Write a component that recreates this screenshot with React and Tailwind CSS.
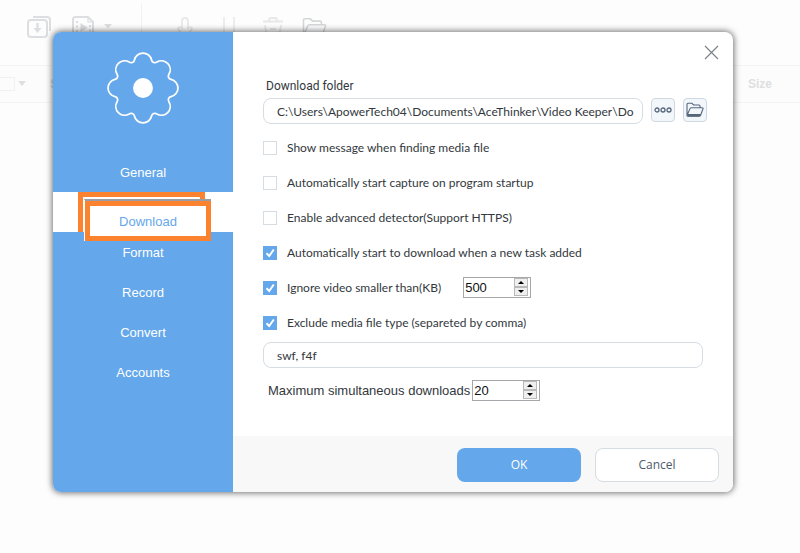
import { useState } from 'react';
import { clsx } from 'clsx';

const NAV_ITEMS = ['General', 'Download', 'Format', 'Record', 'Convert', 'Accounts'];

const OPTIONS = [
  { id: 'message',  label: 'Show message when finding media file' },
  { id: 'startup',  label: 'Automatically start capture on program startup' },
  { id: 'detector', label: 'Enable advanced detector(Support HTTPS)' },
  { id: 'auto',     label: 'Automatically start to download when a new task added' },
  { id: 'ignore',   label: 'Ignore video smaller than(KB)' },
  { id: 'exclude',  label: 'Exclude media file type (separeted by comma)' },
];

function FlowerIcon() {
  return (
    <svg width="74" height="74" viewBox="-38 -38 76 76" fill="none" aria-hidden="true">
      <path
        d="M-8.8-28.8A9 9 0 0 1 8.8-28.8A3.5 3.5 0 0 0 14.2-26.6A9 9 0 0 1 26.6-14.2A3.5 3.5 0 0 0 28.8-8.8A9 9 0 0 1 28.8 8.8A3.5 3.5 0 0 0 26.6 14.2A9 9 0 0 1 14.2 26.6A3.5 3.5 0 0 0 8.8 28.8A9 9 0 0 1-8.8 28.8A3.5 3.5 0 0 0-14.2 26.6A9 9 0 0 1-26.6 14.2A3.5 3.5 0 0 0-28.8 8.8A9 9 0 0 1-28.8-8.8A3.5 3.5 0 0 0-26.6-14.2A9 9 0 0 1-14.2-26.6A3.5 3.5 0 0 0-8.8-28.8Z"
        stroke="#fff"
        strokeWidth="1.8"
      />
      <circle r="10.2" fill="#fff" />
    </svg>
  );
}

function FolderIcon({ className }) {
  return (
    <svg width="18" height="16" viewBox="0 0 18 16" fill="none" className={className} aria-hidden="true">
      <path
        d="M1 13.5V2.2Q1 1.2 2 1.2H5.8L7.6 3H13Q14 3 14 4V5.6M1 13.5L4 6.6Q4.4 5.7 5.4 5.7H16.2Q17.4 5.7 17 6.8L14.6 13.2Q14.2 14.3 13 14.3H1.8Q1 14.3 1 13.5Z"
        stroke="currentColor"
        strokeWidth="1.1"
        strokeLinejoin="round"
      />
      <path d="M1.6 12H15L14.4 13.6Q14 14.4 13 14.4H1.6Z" fill="currentColor" />
    </svg>
  );
}

function Toolbar() {
  return (
    <div className="flex h-[65px] items-start pl-[26px] pt-1 text-[#dcdee1]">
      <div className="flex pt-[11px]">
        <button aria-label="New download">
          <svg width="26" height="24" viewBox="0 0 26 24" fill="none" stroke="currentColor" strokeWidth="2">
            <rect x="2" y="5" width="19" height="17" rx="3" />
            <path d="M7 2H21Q24 2 24 5V16" />
            <path d="M11.5 8V14" strokeWidth="2.4" />
            <path d="M7.5 13H15.5L11.5 18Z" fill="currentColor" stroke="none" />
          </svg>
        </button>
        <button aria-label="Media" className="ml-5">
          <svg width="24" height="24" viewBox="0 0 24 24" fill="none" stroke="currentColor" strokeWidth="2">
            <path d="M4 2H16L21 7V22H3Q1 22 1 20V4Q1 2 4 2Z" />
            <path d="M16 2V7H21" strokeWidth="1.2" />
            <path d="M5 6V20M18 10V20" strokeDasharray="2 2.5" />
            <path d="M8.5 8L15.5 12.5L8.5 17Z" fill="currentColor" stroke="none" />
          </svg>
        </button>
        <svg className="ml-2 mt-2" width="8" height="6" viewBox="0 0 8 6" fill="currentColor" aria-hidden="true">
          <path d="M0 1H8L4 5.5Z" />
        </svg>
      </div>
      <div className="ml-[29px] h-8 w-px bg-[#f1f1f1]" />
      <div className="flex gap-6 pl-8 pt-3 text-[#e8e8e8]">
        <button aria-label="Start">
          <svg width="24" height="24" viewBox="0 0 24 24" fill="none" stroke="currentColor" strokeWidth="1.8">
            <path d="M8 12V5Q8 2 11 2T14 5V12Q18 10 18 13Q16 17 11 20Q6 17 4 13Q4 10 8 12Z" />
          </svg>
        </button>
        <button aria-label="Pause">
          <svg width="20" height="24" viewBox="0 0 20 24" fill="none" stroke="currentColor" strokeWidth="1.5">
            <path d="M2 1V22M12 1V22" />
          </svg>
        </button>
        <button aria-label="Delete" className="-ml-1">
          <svg width="24" height="24" viewBox="0 0 24 24" fill="none" stroke="currentColor" strokeWidth="1.8">
            <path d="M7 4.5Q7 2 9 2H13Q15 2 15 4.5M1 5.5H21M3 9L5 22H17L19 9M8 13H14" />
          </svg>
        </button>
        <button aria-label="Open folder" className="-ml-2 text-[#d4d6d8]">
          <FolderIcon className="h-[22px] w-[25px]" />
        </button>
      </div>
    </div>
  );
}

function MainWindow() {
  return (
    <div className="min-h-screen bg-[#fdfdfd]">
      <Toolbar />
      <div className="flex h-[38px] items-center border-y border-[#f3f3f3] bg-[#fcfcfc] text-[12px] font-bold text-[#dedfe0]">
        <span className="h-[14px] w-[15px] border border-l-0 border-[#f1f1f1]" />
        <svg className="ml-[3px]" width="8" height="6" viewBox="0 0 8 6" fill="currentColor" aria-hidden="true">
          <path d="M0 0H8L4 5Z" />
        </svg>
        <span className="ml-6 flex-1">Status</span>
        <span className="w-[52px]">Size</span>
      </div>
    </div>
  );
}

function NavItem({ label, active, onClick }) {
  return (
    <button
      onClick={onClick}
      className={clsx('relative h-10 w-full pt-[2px] text-[13px]', active ? 'bg-white text-[#64a7ea]' : 'text-white')}
    >
      {label === 'Download' && active ? (
        <>
          <span className="absolute left-[25px] top-0 h-10 w-[127px] border-[5px] border-b-0 border-[#fb8330] bg-white" />
          <span className="absolute left-[31px] top-[7px] flex h-[42px] w-[127px] border-l border-t-2 border-l-white border-t-[#9a9da3] bg-white">
            <span className="flex flex-1 items-center justify-center border-[5px] border-[#fb8330] pt-[2px]">{label}</span>
          </span>
        </>
      ) : (
        label
      )}
    </button>
  );
}

function Sidebar({ page, onSelect }) {
  return (
    <aside className="w-[180px] shrink-0 bg-[#64a7ea]">
      <div className="flex h-[120px] justify-center pt-[19px]">
        <FlowerIcon />
      </div>
      <nav className="flex flex-col">
        {NAV_ITEMS.map(item => (
          <NavItem key={item} label={item} active={item === page} onClick={() => onSelect(item)} />
        ))}
      </nav>
    </aside>
  );
}

function Checkbox({ id, label, checked, onChange }) {
  return (
    <label htmlFor={id} className="flex items-center gap-[10px]">
      <span className="relative flex">
        <input
          id={id}
          type="checkbox"
          checked={checked}
          onChange={onChange}
          className="h-[14px] w-[14px] appearance-none border border-[#d5dce2] bg-white checked:border-[#64a7ea] checked:bg-[#64a7ea]"
        />
        {checked && (
          <svg className="pointer-events-none absolute inset-0" width="14" height="14" viewBox="0 0 14 14" fill="none">
            <path d="M3.5 7.2L6.2 10L10.8 3.5" stroke="#fff" strokeWidth="2" />
          </svg>
        )}
      </span>
      {label}
    </label>
  );
}

function Spinner({ id, label, value, onChange }) {
  const step = (n) => onChange(String(Math.max(0, Number(value) + n)));
  const btn = 'flex h-[9px] w-[14px] items-center justify-center border border-[#b9b9b9] bg-[#efefef] text-black';

  return (
    <div className="flex h-[21px] w-[68px] border border-[#a6a6ab] bg-white">
      <input
        id={id}
        aria-label={label}
        value={value}
        onChange={e => onChange(e.target.value)}
        className="min-w-0 flex-1 pl-px font-['Liberation_Sans',sans-serif] text-[13px] leading-[18px] text-[#111] outline-none"
      />
      <div className="mr-[2px] flex flex-col">
        <button className={btn} aria-label="Increase" onClick={() => step(1)}>
          <svg width="6" height="3" viewBox="0 0 6 3" fill="currentColor"><path d="M0 3L3 0L6 3Z" /></svg>
        </button>
        <button className={btn} aria-label="Decrease" onClick={() => step(-1)}>
          <svg width="6" height="3" viewBox="0 0 6 3" fill="currentColor"><path d="M0 0H6L3 3Z" /></svg>
        </button>
      </div>
    </div>
  );
}

function DownloadSettings() {
  const [folder, setFolder] = useState('C:\\Users\\ApowerTech04\\Documents\\AceThinker\\Video Keeper\\Do');
  const [checks, setChecks] = useState({ auto: true, ignore: true, exclude: true });
  const [minSize, setMinSize] = useState('500');
  const [types, setTypes] = useState('swf, f4f');
  const [maxDownloads, setMaxDownloads] = useState('20');

  const toggle = (id) => setChecks(c => ({ ...c, [id]: !c[id] }));
  const field = 'h-[26px] min-w-0 flex-1 rounded-lg border border-[#d5dce2] bg-white pl-[13px] pr-2 outline-none';
  const iconBtn = 'flex h-6 w-6 items-center justify-center rounded border border-[#cfd8e0] bg-[#f2f7fb] text-[#56677a]';

  return (
    <div className="px-[30px] pb-[35px] font-[Lato,sans-serif]">
      <label htmlFor="folder" className="block pl-[3px] font-[Roboto,sans-serif] leading-6">
        Download folder
      </label>
      <div className="-mr-1 flex items-start gap-2">
        <input id="folder" className={field} value={folder} onChange={e => setFolder(e.target.value)} />
        <button className={iconBtn} aria-label="More">
          <svg width="18" height="6" viewBox="0 0 18 6" fill="none" stroke="currentColor" strokeWidth="1.3">
            <circle cx="3" cy="3" r="2" />
            <circle cx="9" cy="3" r="2" />
            <circle cx="15" cy="3" r="2" />
          </svg>
        </button>
        <button className={iconBtn} aria-label="Browse">
          <FolderIcon />
        </button>
      </div>

      {/* Options */}
      <div className="pt-[6px]">
        {OPTIONS.map(({ id, label }) => (
          <div key={id} className="flex h-[35px] items-center gap-[22px]">
            <Checkbox id={id} label={label} checked={!!checks[id]} onChange={() => toggle(id)} />
            {id === 'ignore' && (
              <Spinner id="min-size" label="Minimum size in KB" value={minSize} onChange={setMinSize} />
            )}
          </div>
        ))}
      </div>

      <div className="flex pt-[2px]">
        <input aria-label="Excluded types" className={field} value={types} onChange={e => setTypes(e.target.value)} />
      </div>
      <div className="mt-3 flex items-center gap-[2px] pl-[5px]">
        <label htmlFor="max-downloads" className="font-['Liberation_Sans',sans-serif] text-[13px]">
          Maximum simultaneous downloads
        </label>
        <Spinner id="max-downloads" value={maxDownloads} onChange={setMaxDownloads} />
      </div>
    </div>
  );
}

export default function App() {
  const [page, setPage] = useState('Download');

  return (
    <div className="relative min-h-screen font-['Liberation_Sans',sans-serif]">
      <MainWindow />
      <div className="absolute inset-0 pl-[53px] pr-[67px] pt-8">
        <div
          role="dialog"
          aria-label="Settings"
          className="flex overflow-hidden rounded-lg bg-white shadow-[0_0_6px_1px_rgba(0,0,0,0.55)]"
        >
          <Sidebar page={page} onSelect={setPage} />
          <main className="flex min-w-0 flex-1 flex-col font-['Open_Sans',sans-serif] text-[12px] text-[#33383d]">
            <div className="flex h-[42px] justify-end pr-[14px] pt-[13px]">
              <button aria-label="Close" className="h-[15px] w-[15px] text-[#7d8288]">
                <svg width="15" height="15" viewBox="0 0 15 15" stroke="currentColor" strokeWidth="1.2">
                  <path d="M1 1L14 14M14 1L1 14" />
                </svg>
              </button>
            </div>
            <DownloadSettings />
            <footer className="mt-auto flex h-14 items-start justify-end gap-[14px] bg-[#f8f8f8] pr-[14px] pt-3">
              <button className="h-[34px] w-[124px] rounded-lg bg-[#64a7ea] text-white">OK</button>
              <button className="h-[34px] w-[124px] rounded-lg border border-[#d5dce2] bg-white text-[#4a5a6a]">
                Cancel
              </button>
            </footer>
          </main>
        </div>
      </div>
    </div>
  );
}
